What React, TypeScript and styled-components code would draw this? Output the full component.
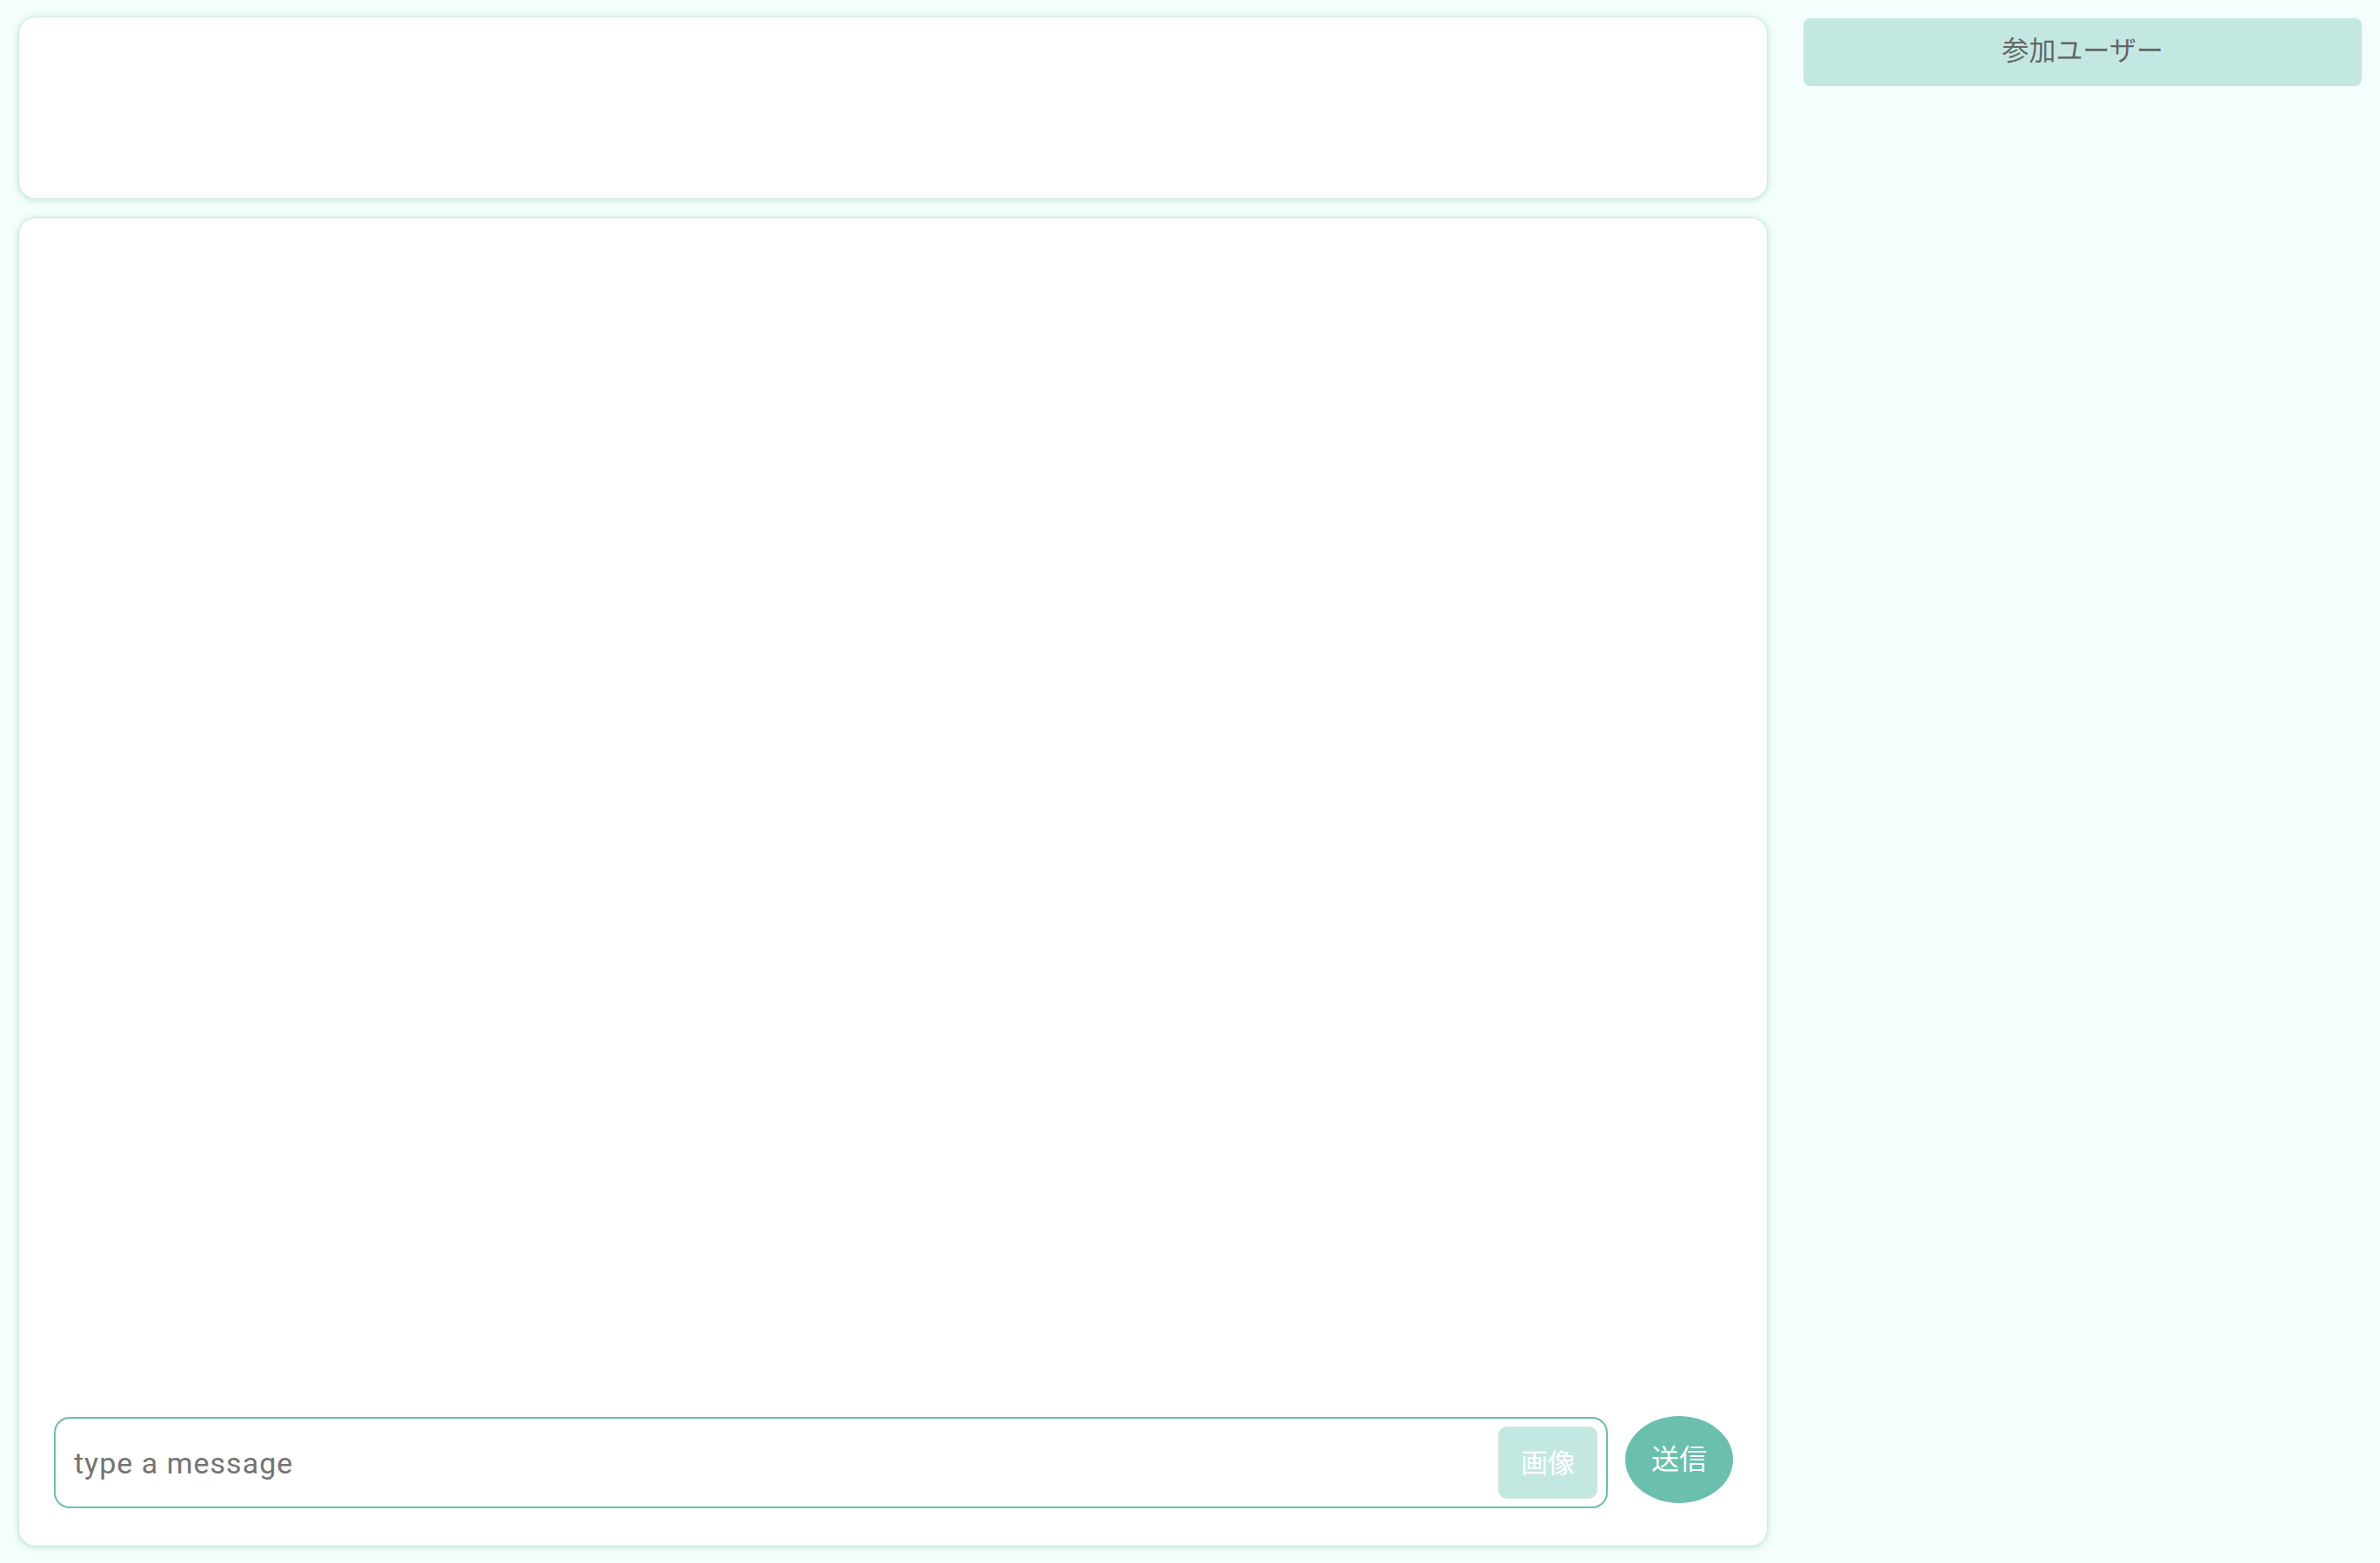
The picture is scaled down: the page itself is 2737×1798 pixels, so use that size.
import React from "react";
import styled, { createGlobalStyle } from "styled-components";

const GlobalStyle = createGlobalStyle`
  html, body {
    margin: 0;
    padding: 0;
    background: #f4fefc;
  }
  * { box-sizing: border-box; }
  body {
    font-family: "Roboto", "Noto Sans CJK JP", sans-serif;
  }
`;

const Page = styled.div`
  display: flex;
  gap: 41px;
  height: 100vh;
  padding: 19px 21px 19px 21px;
  background: #f4fefc;
`;

const MainColumn = styled.div`
  flex: 1;
  display: flex;
  flex-direction: column;
  gap: 21px;
  min-width: 0;
`;

const Card = styled.div<{ $grow?: boolean }>`
  background: #ffffff;
  border: 1px solid #cdebe4;
  border-radius: 20px;
  box-shadow: 0 1px 7px rgba(100, 190, 170, 0.42);
  ${(p) => (p.$grow ? "flex: 1;" : "height: 210px;")}
  display: flex;
  flex-direction: column;
  justify-content: flex-end;
`;

const Composer = styled.form`
  display: flex;
  align-items: center;
  gap: 20px;
  padding: 0 39px 42px 40px;
`;

const InputBox = styled.div`
  flex: 1;
  height: 105px;
  display: flex;
  align-items: center;
  border: 2px solid #6bbfad;
  border-radius: 18px;
  padding: 0 10px 0 19px;
`;

const MessageInput = styled.input`
  flex: 1;
  border: none;
  outline: none;
  background: transparent;
  font-family: "Roboto", "Noto Sans CJK JP", sans-serif;
  font-size: 34px;
  letter-spacing: 1px;
  color: #333;
  &::placeholder {
    color: #737373;
  }
`;

const ImageButton = styled.button`
  width: 114px;
  height: 83px;
  border: none;
  border-radius: 10px;
  background: #c3e8e1;
  color: #ffffff;
  font-family: "Noto Sans CJK JP", sans-serif;
  font-size: 31px;
  padding: 0 0 4px;
`;

const SendButton = styled.button`
  width: 124px;
  height: 100px;
  border: none;
  border-radius: 50%;
  background: #6abfad;
  color: #ffffff;
  font-family: "Noto Sans CJK JP", sans-serif;
  font-size: 32px;
  padding: 0 0 6px;
  margin-bottom: 7px;
`;

const Sidebar = styled.aside`
  width: 642px;
  display: flex;
  flex-direction: column;
`;

const SidebarHeader = styled.div`
  height: 78px;
  border-radius: 8px;
  background: #c3e8e1;
  color: #666666;
  font-family: "Noto Sans CJK JP", sans-serif;
  font-size: 31px;
  display: flex;
  align-items: center;
  justify-content: center;
  margin-top: 2px;
  padding-bottom: 9px;
`;

export default function App() {
  return (
    <>
      <GlobalStyle />
      <Page>
        <MainColumn>
          <Card />
          <Card $grow>
            <Composer onSubmit={(e) => e.preventDefault()}>
              <InputBox>
                <MessageInput placeholder="type a message" />
                <ImageButton type="button">画像</ImageButton>
              </InputBox>
              <SendButton type="submit">送信</SendButton>
            </Composer>
          </Card>
        </MainColumn>
        <Sidebar>
          <SidebarHeader>参加ユーザー</SidebarHeader>
        </Sidebar>
      </Page>
    </>
  );
}
